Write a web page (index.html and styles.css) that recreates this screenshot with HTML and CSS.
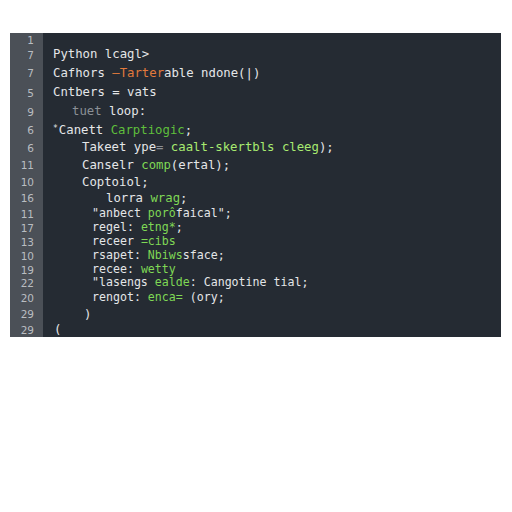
FILE: index.html
```html
<!DOCTYPE html>
<html>
<head>
<meta charset="utf-8">
<link rel="stylesheet" href="styles.css">
</head>
<body>
<div class="editor">
  <div class="row h13"><span class="num">1</span><span class="code"></span></div>
  <div class="row h17"><span class="num">7</span><span class="code i0">Python lcagl&gt;</span></div>
  <div class="row h20"><span class="num">7</span><span class="code i0">Cafhors <span class="or">–Tarter</span>able ndone(|)</span></div>
  <div class="row h19"><span class="num">5</span><span class="code i0">Cntbers = vats</span></div>
  <div class="row h19"><span class="num">9</span><span class="code i1"><span class="dim">tuet</span> loop:</span></div>
  <div class="row h18"><span class="num">6</span><span class="code i0"><span class="star">*</span>Canett <span class="gd">Carptiogic</span>;</span></div>
  <div class="row h17"><span class="num">6</span><span class="code i2">Takeet ype<span class="dim">=</span> <span class="gl">caalt-skertbls cleeg</span>);</span></div>
  <div class="row h18"><span class="num">11</span><span class="code i2">Canselr <span class="gm">comp</span>(ertal);</span></div>
  <div class="row h16"><span class="num">10</span><span class="code i2">Coptoiol;</span></div>
  <div class="row h16"><span class="num">16</span><span class="code i4">lorra <span class="gm">wrag</span>;</span></div>
  <div class="row h15"><span class="num">11</span><span class="code i3 sm">"anbect <span class="gm">porô</span>faical";</span></div>
  <div class="row h14"><span class="num">17</span><span class="code i3 sm">regel: <span class="gm">etng*</span>;</span></div>
  <div class="row h14"><span class="num">13</span><span class="code i3 sm">receer <span class="gm">=cibs</span></span></div>
  <div class="row h14"><span class="num">10</span><span class="code i3 sm">rsapet: <span class="gm">Nbiws</span>sface;</span></div>
  <div class="row h13"><span class="num">19</span><span class="code i3 sm">recee: <span class="gm">wetty</span></span></div>
  <div class="row h14"><span class="num">22</span><span class="code i3 sm">"lasengs <span class="gm">ealde</span>: Cangotine tial;</span></div>
  <div class="row h16"><span class="num">20</span><span class="code i3 sm">rengot: <span class="gm">enca=</span> (ory;</span></div>
  <div class="row h16"><span class="num">29</span><span class="code i5">)</span></div>
  <div class="row h15"><span class="num">29</span><span class="code i6">(</span></div>
</div>
</body>
</html>
```

FILE: styles.css
```css
html, body {
  margin: 0;
  padding: 0;
  background: #ffffff;
}
body {
  padding-top: 33px;
  padding-left: 10px;
}
.editor {
  width: 491px;
  height: 304px;
  background: #252b33;
  display: flex;
  flex-direction: column;
  font-family: "DejaVu Sans Mono", monospace;
  font-size: 12.3px;
  color: #e4e6e8;
  overflow: hidden;
}
.row {
  display: flex;
  align-items: center;
  white-space: pre;
}
.h13 { height: 13px; }
.h14 { height: 14px; }
.h15 { height: 15px; }
.h16 { height: 16px; }
.h17 { height: 17px; }
.h18 { height: 18px; }
.h19 { height: 19px; }
.h20 { height: 20px; }
.num {
  width: 33px;
  height: 100%;
  box-sizing: border-box;
  padding-right: 9px;
  background: #4b5057;
  color: #b9bdc1;
  font-family: "DejaVu Sans", sans-serif;
  font-size: 10.5px;
  display: flex;
  align-items: center;
  justify-content: flex-end;
}
.code {
  line-height: 1;
}
.i0 { padding-left: 10px; }
.i1 { padding-left: 29px; }
.i2 { padding-left: 39px; }
.i3 { padding-left: 49px; }
.i4 { padding-left: 63px; }
.i5 { padding-left: 41px; }
.i6 { padding-left: 11px; }
.sm { font-size: 11.6px; }
.or { color: #e27a3c; }
.dim { color: #8b9096; }
.star { font-size: 8px; vertical-align: 3px; margin-right: 1px; }
.gd { color: #5fbf3c; }
.gl { color: #a8ea70; }
.gm { color: #7fd855; }
```
